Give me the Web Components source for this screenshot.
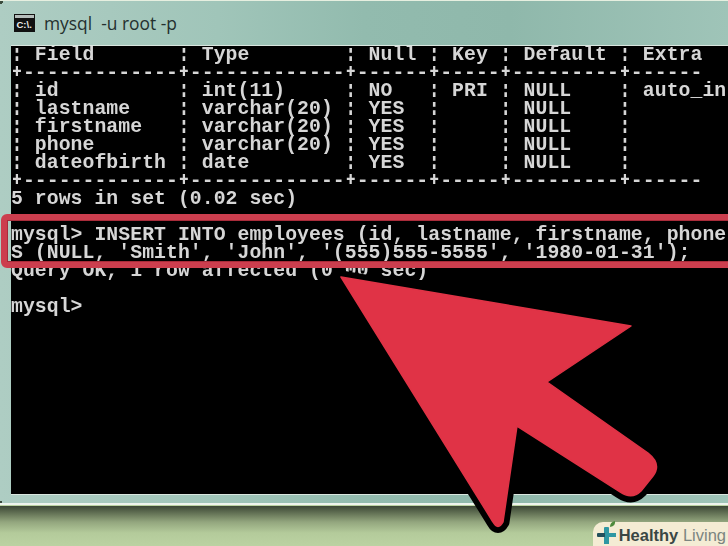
<!DOCTYPE html>
<html lang="en">
<head>
<meta charset="UTF-8" />
<title>mysql -u root -p</title>
<style>
  html, body { margin: 0; background: #bbd2a2; }
</style>
</head>
<body>
<x-page>
  <x-window>
    <x-titlebar slot="title">mysql  -u root -p</x-titlebar>
<x-console>¦ Field       ¦ Type        ¦ Null ¦ Key ¦ Default ¦ Extra
+-------------+-------------+------+-----+---------+------
¦ id          ¦ int(11)     ¦ NO   ¦ PRI ¦ NULL    ¦ auto_in
¦ lastname    ¦ varchar(20) ¦ YES  ¦     ¦ NULL    ¦
¦ firstname   ¦ varchar(20) ¦ YES  ¦     ¦ NULL    ¦
¦ phone       ¦ varchar(20) ¦ YES  ¦     ¦ NULL    ¦
¦ dateofbirth ¦ date        ¦ YES  ¦     ¦ NULL    ¦
+-------------+-------------+------+-----+---------+------
5 rows in set (0.02 sec)

mysql&gt; INSERT INTO employees (id, lastname, firstname, phone
S (NULL, 'Smith', 'John', '(555)555-5555', '1980-01-31');
Query OK, 1 row affected (0.00 sec)

mysql&gt;</x-console>
  </x-window>
  <x-highlight></x-highlight>
  <x-arrow></x-arrow>
  <x-badge>Healthy Living</x-badge>
</x-page>

<script>
  // the whole screenshot: window on top, green shadow strip under it
  class XPage extends HTMLElement {
    connectedCallback() {
      this.attachShadow({ mode: "open" }).innerHTML = `
        <style>
          :host { display: flex; flex-direction: column; position: relative; width: 728px; height: 546px; overflow: hidden;
                  background: linear-gradient(#3c4736 0, #5d6b50 6px, #93a67e 16px, #b4cb9b 27px, #bbd2a2 40px) 0 506px / 100% 40px no-repeat; }
        </style>
        <slot></slot>`;
    }
  }

  class XWindow extends HTMLElement {
    connectedCallback() {
      this.attachShadow({ mode: "open" }).innerHTML = `
        <style>
          :host { display: flex; flex-direction: column; height: 505px; box-sizing: border-box; padding-left: 11px;
                  background: radial-gradient(circle 5px at 0 0, #3a4a3c 60%, transparent 61%),
                              radial-gradient(circle 4px at 0 100%, #3a4a3c 60%, transparent 61%),
                              linear-gradient(90deg, #aecdc3 0, #a0c5b9 30%, #92bbae 50%, #8fb8ab 70%, #9fc4b8 100%);
                  border-top: 1px solid #e6efe0; border-bottom: 2px solid #eef4ee; box-shadow: 0 -1px 0 #8aa995; }
          .title { height: 44px; margin-left: -11px; }
        </style>
        <div class="title"><slot name="title"></slot></div>
        <slot></slot>`;
    }
  }

  class XTitlebar extends HTMLElement {
    connectedCallback() {
      this.attachShadow({ mode: "open" }).innerHTML = `
        <style>
          :host { display: flex; align-items: center; gap: 9px; height: 44px; padding: 0 0 1px 14px; box-sizing: border-box;
                  font: 17.4px "Open Sans", sans-serif; color: #24302e; white-space: pre; }
          svg { display: block; width: 21px; height: 18px; }
        </style>
        <svg viewBox="0 0 21 18">
          <rect width="21" height="18" fill="#111"/>
          <rect x="1" y="1" width="19" height="3" fill="#b5bdbb"/>
          <text x="2.5" y="14" font-family="Liberation Sans" font-weight="700" font-size="9.5" fill="#eee">C:\\.</text>
        </svg>
        <slot></slot>`;
    }
  }

  class XConsole extends HTMLElement {
    connectedCallback() {
      // the raster font has short bars and gappy dashes: black strips over the table rules give the same look
      const pitch = 11.93;
      const bars = [0, 14, 28, 35, 41, 51].map(col =>
        `linear-gradient(#000 2px, transparent 2px 15px, #000 15px) ${col * pitch}px 0 / ${pitch}px 18px repeat-y`);
      const dashes = [18, 126].map(y =>
        `linear-gradient(90deg, #000 2px, transparent 2px 9.5px, #000 9.5px) 0 ${y}px / ${pitch}px 18px repeat-x`);
      this.attachShadow({ mode: "open" }).innerHTML = `
        <style>
          :host { display: block; height: 448px; background: #000; overflow: hidden; color: #d6d6d6;
                  border-bottom: 1px solid #d9e6df; border-top: 1px solid #d9e6df; }
          .text { position: relative; font: 700 19.8px/18px "Liberation Mono", monospace; letter-spacing: .05px; white-space: pre; filter: blur(.3px); }
          .text::after { content: ""; position: absolute; left: 0; top: 0; width: 100%; height: 144px; background: ${[...bars, ...dashes].join(", ")}; }
        </style>
        <div class="text"><slot></slot></div>`;
    }
  }

  // red box round the statement, runs off the right side of the shot
  class XHighlight extends HTMLElement {
    connectedCallback() {
      this.attachShadow({ mode: "open" }).innerHTML = `
        <style>
          :host { position: absolute; left: 1px; top: 214px; width: 760px; height: 54px; box-sizing: border-box;
                  border: 6px solid #cc3e4e; border-radius: 6px;
                  box-shadow: inset 0 0 0 1px #a82c3a; }
        </style>`;
    }
  }

  class XArrow extends HTMLElement {
    connectedCallback() {
      const d = "M341 277 L631 326 L547 382 L648 453 Q662 464 653 476 L641 491 Q632 500 620 492 L517 426 L503 522 Q498 531 493 522 Z";
      this.attachShadow({ mode: "open" }).innerHTML = `
        <style>
          :host { position: absolute; left: 0; top: 0; width: 728px; height: 546px; }
          svg { display: block; }
        </style>
        <svg width="728" height="546" viewBox="0 0 728 546">
          <path d="${d}" fill="#000" stroke="#000" stroke-width="13" stroke-linejoin="round"/>
          <path d="${d}" fill="#e03346" stroke="#e03346" stroke-width="1.5" stroke-linejoin="round"/>
        </svg>`;
    }
  }

  class XBadge extends HTMLElement {
    connectedCallback() {
      this.attachShadow({ mode: "open" }).innerHTML = `
        <style>
          :host { position: absolute; right: 0; bottom: 0; display: flex; align-items: center; gap: 2px; height: 24px;
                  padding: 0 2px 0 3px; background: #f4ecd4; border-top-left-radius: 10px;
                  font: 16.5px "Liberation Sans", sans-serif; color: #7b8580; white-space: pre; }
          svg { display: block; width: 21px; height: 24px; margin-top: -2px; }
          div { margin-top: 3px; }
        </style>
        <svg viewBox="0 0 21 24">
          <path d="M8 7 Q8 6 9 6 H12 Q13 6 13 7 V12 H20 V16 H13 V23 H8 V12 Z" fill="#2f97a3"/>
          <path d="M1 13 Q1 12 2 12 H9 V16 H2 Q1 16 1 15 Z" fill="#24505c"/>
          <path d="M14 6 Q14 1 19 0 Q20 5 14 6 Z" fill="#4d8a3c"/>
        </svg>
        <div><b id="a"></b><span id="b"></span></div>`;
      const [first, second] = this.textContent.split(" ");
      this.shadowRoot.getElementById("a").textContent = first;
      this.shadowRoot.getElementById("a").style.color = "#3a4744";
      this.shadowRoot.getElementById("b").textContent = " " + second;
    }
  }

  customElements.define("x-page", XPage);
  customElements.define("x-window", XWindow);
  customElements.define("x-titlebar", XTitlebar);
  customElements.define("x-console", XConsole);
  customElements.define("x-highlight", XHighlight);
  customElements.define("x-arrow", XArrow);
  customElements.define("x-badge", XBadge);
</script>
</body>
</html>
